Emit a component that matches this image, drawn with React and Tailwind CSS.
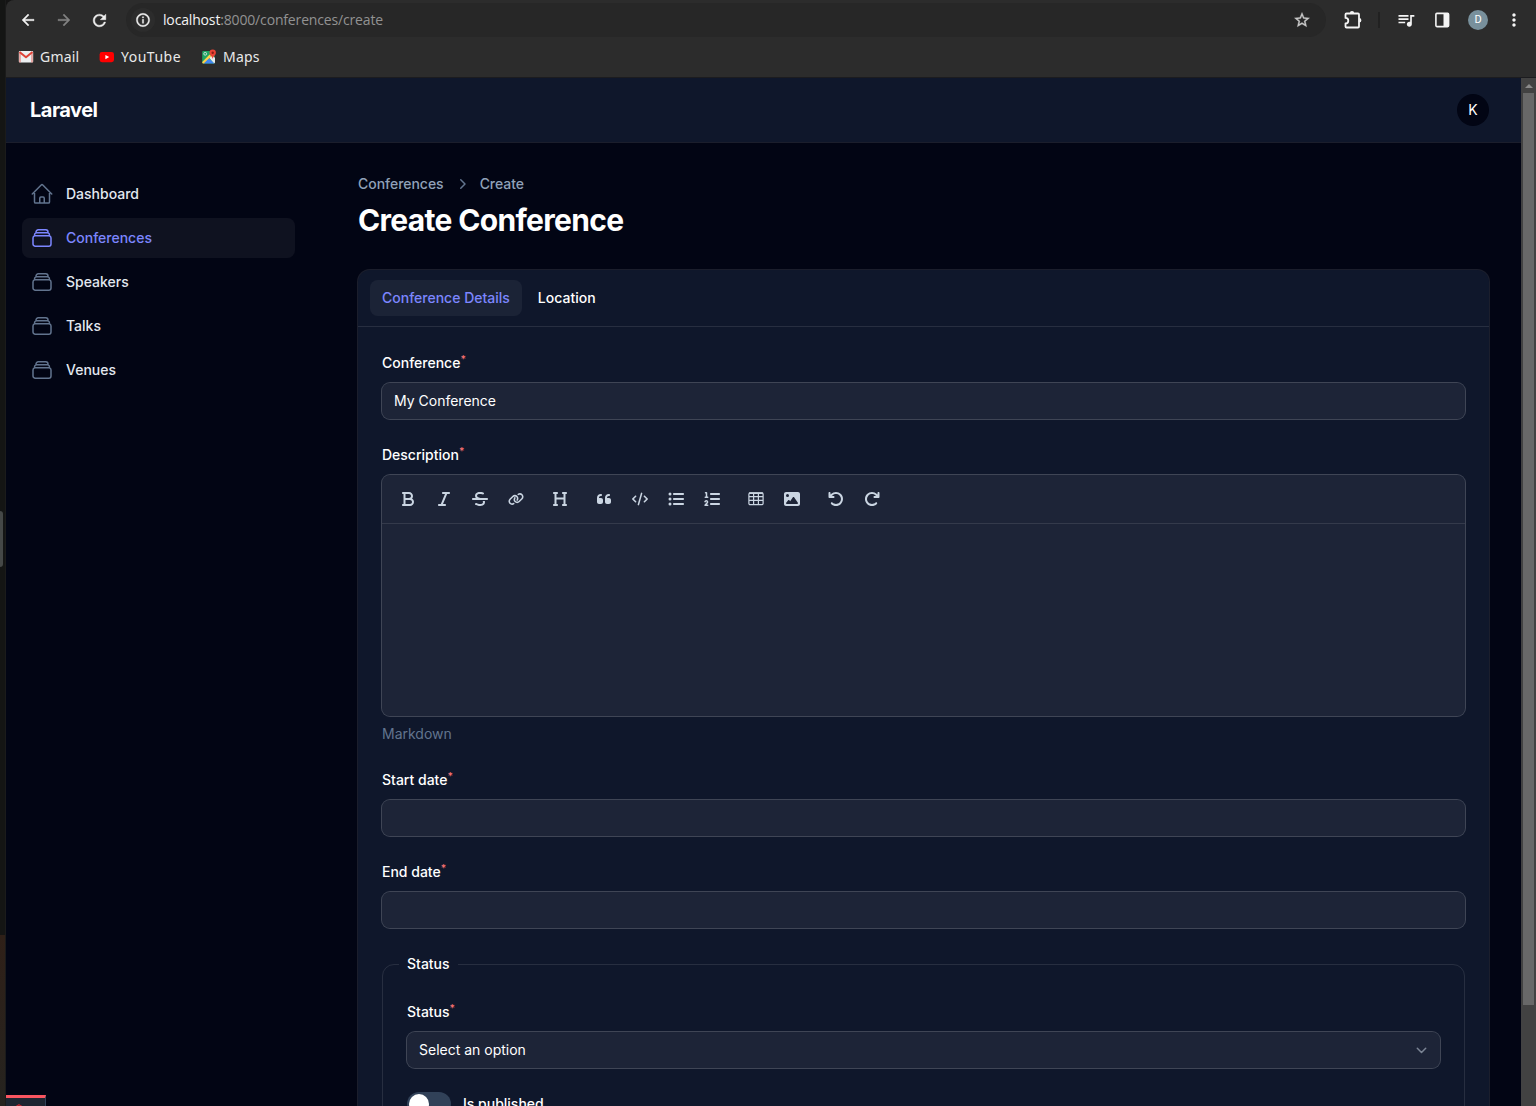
import React from "react";
import { MdQueueMusic, MdMoreVert } from "react-icons/md";
import {
  FaBold, FaItalic, FaStrikethrough, FaLink, FaHeading, FaQuoteLeft, FaCode,
  FaListUl, FaListOl, FaImage, FaArrowRotateLeft, FaArrowRotateRight,
} from "react-icons/fa6";
import { HiOutlineHome, HiOutlineRectangleStack, HiMiniChevronRight } from "react-icons/hi2";

function ChromeIcon({ d, className }) {
  return (
    <svg viewBox="0 0 24 24" className={className} fill="currentColor" stroke="currentColor" strokeWidth="0.500">
      <path d={d} />
    </svg>
  );
}

const glyphs = {
  back: "M20 11H7.830l5.590-5.590L12 4l-8 8 8 8 1.410-1.410L7.830 13H20v-2z",
  forward: "M12 4l-1.410 1.410L16.170 11H4v2h12.170l-5.580 5.590L12 20l8-8z",
  refresh: "M17.650 6.350A7.958 7.958 0 0 0 12 4c-4.420 0-7.990 3.580-7.990 8s3.570 8 7.990 8c3.730 0 6.840-2.550 7.730-6h-2.080A5.990 5.990 0 0 1 12 18c-3.310 0-6-2.690-6-6s2.690-6 6-6c1.660 0 3.140.69 4.220 1.780L13 11h7V4l-2.350 2.350z",
  info: "M11 7h2v2h-2zm0 4h2v6h-2zm1-9C6.480 2 2 6.480 2 12s4.480 10 10 10 10-4.480 10-10S17.520 2 12 2zm0 18c-4.410 0-8-3.590-8-8s3.590-8 8-8 8 3.590 8 8-3.590 8-8 8z",
  star: "M22 9.240l-7.190-.62L12 2 9.190 8.630 2 9.240l5.460 4.730L5.820 21 12 17.270 18.180 21l-1.630-7.030L22 9.240zM12 15.400l-3.760 2.270 1-4.280-3.320-2.880 4.380-.38L12 6.100l1.710 4.040 4.380.38-3.320 2.880 1 4.280L12 15.400z",
};

function GmailIcon() {
  return (
    <svg viewBox="0 0 16 16" className="h-4 w-4">
      <rect x="0.800" y="2" width="14.400" height="11.600" rx="1" fill="#eceff1" />
      <path d="M2 13.600V4M14 13.600V4" stroke="#e2645b" strokeWidth="1.400" opacity=".7" />
      <path d="M1.500 3 8 8.300 14.500 3" fill="none" stroke="#df4338" strokeWidth="2" strokeLinejoin="round" />
    </svg>
  );
}

function YouTubeIcon() {
  return (
    <svg viewBox="0 0 16 16" className="h-4 w-4">
      <rect x="0.600" y="3" width="14.400" height="10.200" rx="2.400" fill="#f00" />
      <path d="M6.400 5.900v4.400l3.800-2.200z" fill="#fff" />
    </svg>
  );
}

function MapsIcon() {
  return (
    <svg viewBox="0 0 16 16" className="h-4 w-4">
      <path d="M2.500 2h11v12.600h-11a1.300 1.300 0 0 1-1.300-1.300V3.300A1.300 1.300 0 0 1 2.500 2z" fill="#1fa463" />
      <path d="m8 8.500 3.600-2.500 2.400 3v4.500l-1 1.100z" fill="#e8eaed" />
      <path d="m1.200 12.900 7.400-7.400 1.800 1.800-7.300 7.300h-.6a1.300 1.300 0 0 1-1.300-1.300z" fill="#ffd04b" />
      <path d="M8 9.400 13.400 14.600H2.800z" fill="#4285f4" />
      <circle cx="4.200" cy="4.800" r="1.400" fill="none" stroke="#e8eaed" strokeWidth=".8" />
      <path d="M11.700.6a3.200 3.200 0 0 1 3.200 3.200c0 2.500-2.500 3-3.200 6.200-.7-3.200-3.200-3.700-3.200-6.200A3.200 3.200 0 0 1 11.700.6z" fill="#ea4335" />
      <circle cx="11.700" cy="3.700" r="1.200" fill="#8c1f17" />
    </svg>
  );
}

function PuzzleIcon() {
  return (
    <svg viewBox="0 0 20 20" className="h-5 w-5">
      <path
        d="M3.500 3.500H15a1 1 0 0 1 1 1v12a1 1 0 0 1-1 1H3.500a1 1 0 0 1-1-1v-3a2.700 2.700 0 0 0 0-5.600V4.500a1 1 0 0 1 1-1z"
        fill="none"
        stroke="currentColor"
        strokeWidth="1.800"
        strokeLinejoin="round"
      />
      <path d="M6.800 3.200a2.200 2.200 0 0 1 4.400 0zM16.200 8.100a2.200 2.200 0 0 1 0 4.400z" fill="currentColor" />
    </svg>
  );
}

function TableIcon() {
  return (
    <svg viewBox="0 0 16 16" className="h-4 w-4" fill="none" stroke="currentColor" strokeWidth="1.200">
      <rect x="0.900" y="1.900" width="14.200" height="11.800" rx="1.300" />
      <path d="M1 2.200h14" strokeWidth="1.600" />
      <path d="M1 5.600h14M1 9.400h14M5.600 2v11.500M10.400 2v11.500" />
    </svg>
  );
}

function Browser() {
  return (
    <div className="flex h-[78px] shrink-0 flex-col rounded-tl-lg border-b border-[#1c1c1f] bg-[#2c2c2c]">
      <div className="flex h-10 items-center">
        <div className="flex w-[120px] items-center gap-[18px] pl-[13px] text-[#f1f1f1]">
          <ChromeIcon d={glyphs.back} className="h-[18px] w-[18px] shrink-0" />
          <ChromeIcon d={glyphs.forward} className="h-[18px] w-[18px] shrink-0 text-[#828282]" />
          <ChromeIcon d={glyphs.refresh} className="h-[19px] w-[19px] shrink-0 -translate-x-px" />
        </div>
        <div className="flex h-[34px] w-[1200px] items-center rounded-full bg-[#272727] pl-[5px] pr-[15px]">
          <span className="flex h-6 w-6 items-center justify-center rounded-full bg-[#2c2c2c] text-[#efefef]">
            <ChromeIcon d={glyphs.info} className="h-4 w-4" />
          </span>
          <span className="ml-2 font-['Open_Sans','Noto_Sans',sans-serif] text-[14px] leading-5 tracking-[-0.160px] text-[#929292]">
            <span className="text-[#f3f3f3]">localhost</span>:8000/conferences/create
          </span>
          <ChromeIcon d={glyphs.star} className="ml-auto h-[18px] w-[18px] text-[#cacaca]" />
        </div>
        <div className="flex flex-1 items-center pl-[17px] text-[#f5f5f5]">
          <PuzzleIcon />
          <span className="ml-[15px] h-4 w-0.5 bg-[#212121]" />
          <MdQueueMusic className="ml-4 h-5 w-5" />
          <svg viewBox="0 0 16 16" className="ml-[18px] h-4 w-4">
            <rect x="1.900" y="1.400" width="12.700" height="13.200" rx="1" fill="none" stroke="currentColor" strokeWidth="1.600" />
            <path d="M9.500 1h5v14h-5z" fill="currentColor" />
          </svg>
          <span className="ml-[18px] flex h-5 w-5 items-center justify-center rounded-full bg-[#78909c] font-['Roboto',sans-serif] text-[11px] text-white">D</span>
          <MdMoreVert className="ml-4 h-5 w-5" />
        </div>
      </div>
      <div className="flex h-[34px] items-center pl-3 font-['Noto_Sans',sans-serif] text-[14px] text-[#e9e9e9]">
        <GmailIcon />
        <span className="-mt-0.5 ml-1.5 w-[59px] tracking-[0.200px]">Gmail</span>
        <YouTubeIcon />
        <span className="-mt-0.5 ml-1.5 w-20 tracking-[0.500px]">YouTube</span>
        <MapsIcon />
        <span className="-mt-0.5 ml-1.5 tracking-[0.200px]">Maps</span>
      </div>
    </div>
  );
}

function NavItem({ icon: Icon, label, active }) {
  return (
    <a className={`flex h-10 items-center gap-3 rounded-lg px-2 text-sm font-medium ${active ? "bg-white/5 text-indigo-400" : "text-slate-200"}`}>
      <Icon className={`h-6 w-6 ${active ? "text-indigo-400" : "text-slate-500"}`} />
      {label}
    </a>
  );
}

function Label({ children }) {
  return (
    <div className="h-6 text-sm font-medium leading-6 text-white">
      {children}
      <sup className="font-medium text-[#f87171]">*</sup>
    </div>
  );
}

function Field({ label, children }) {
  return (
    <div className="grid gap-2">
      <Label>{label}</Label>
      {children}
    </div>
  );
}

function Input({ children }) {
  return (
    <div className="flex h-9 items-center rounded-lg bg-white/[0.060] px-3 text-sm text-white ring-1 ring-white/20">
      {children}
    </div>
  );
}

const toolGroups = [
  [FaBold, FaItalic, FaStrikethrough, FaLink],
  [FaHeading],
  [FaQuoteLeft, FaCode, FaListUl, FaListOl],
  [TableIcon, FaImage],
  [FaArrowRotateLeft, FaArrowRotateRight],
];

function Editor() {
  return (
    <div>
      <div className="h-[241px] rounded-lg bg-white/[0.060] ring-1 ring-white/20">
        <div className="flex h-[49px] items-center gap-3 border-b border-white/10 px-2.5 text-slate-300">
          {toolGroups.map((group, i) => (
            <div key={i} className="flex gap-1">
              {group.map((Icon, j) => (
                <span key={j} className="flex h-8 w-8 items-center justify-center">
                  <Icon className="h-4 w-4" />
                </span>
              ))}
            </div>
          ))}
        </div>
      </div>
      <div className="mt-2 text-sm text-slate-500">Markdown</div>
    </div>
  );
}

function Sidebar() {
  return (
    <nav className="flex w-80 shrink-0 flex-col gap-1 pl-4 pr-[31px] pt-8">
      <NavItem icon={HiOutlineHome} label="Dashboard" />
      <NavItem icon={HiOutlineRectangleStack} label="Conferences" active />
      <NavItem icon={HiOutlineRectangleStack} label="Speakers" />
      <NavItem icon={HiOutlineRectangleStack} label="Talks" />
      <NavItem icon={HiOutlineRectangleStack} label="Venues" />
    </nav>
  );
}

function Main() {
  return (
    <main className="flex-1 px-8 pt-8">
      <div className="flex h-5 items-center gap-2 text-sm font-medium tracking-[-0.030px] text-slate-400">
        Conferences
        <HiMiniChevronRight className="h-5 w-5 text-slate-500" />
        Create
      </div>
      <h1 className="mt-2 text-3xl font-bold leading-9 tracking-[-0.680px] text-white">Create Conference</h1>
      <section className="mt-8 h-[900px] rounded-xl bg-slate-900 ring-1 ring-white/10">
        <div className="flex h-[57px] items-center gap-1 border-b border-white/10 px-3 text-sm font-medium text-white">
          <span className="flex h-9 items-center rounded-lg bg-white/5 px-3 text-indigo-400">Conference Details</span>
          <span className="flex h-9 items-center px-3">Location</span>
        </div>
        <div className="flex flex-col gap-6 p-6">
          <Field label="Conference"><Input>My Conference</Input></Field>
          <Field label="Description"><Editor /></Field>
          <Field label="Start date"><Input /></Field>
          <Field label="End date"><Input /></Field>
          <fieldset className="h-72 rounded-xl border border-white/10 px-6">
            <legend className="-ml-2 px-2 text-sm font-medium leading-6 text-white">Status</legend>
            <div className="flex flex-col gap-6 pt-6">
              <Field label="Status">
                <Input>
                  Select an option
                  <svg viewBox="0 0 20 20" className="-mr-[3px] ml-auto h-5 w-5" fill="none" stroke="#7b8494" strokeWidth="1.500" strokeLinecap="round" strokeLinejoin="round">
                    <path d="m6.300 8.300 4.200 4.200 4.200-4.200" />
                  </svg>
                </Input>
              </Field>
              <div className="flex items-center gap-3 text-sm font-medium leading-6 text-white">
                <span className="flex h-6 w-11 rounded-full bg-slate-700 p-0.5">
                  <span className="h-5 w-5 rounded-full bg-white" />
                </span>
                Is published
              </div>
            </div>
          </fieldset>
        </div>
      </section>
    </main>
  );
}

function Scrollbar() {
  return (
    <div className="flex w-[15px] shrink-0 flex-col items-center bg-[#424242]">
      <div className="flex h-[15px] items-center">
        <svg viewBox="0 0 8 4" className="h-1 w-2"><path d="M0 4 4 0l4 4z" fill="#8a8a8a" /></svg>
      </div>
      <div className="h-[912px] w-[11px] bg-[#686868]" />
    </div>
  );
}

export default function App() {
  return (
    <div className="relative flex h-[1106px] w-[1536px] overflow-hidden bg-[#141414] font-['Inter',sans-serif] antialiased">
      <div className="flex w-1.5 shrink-0 flex-col border-r border-[#1b1b1b] bg-[#141514]">
        <div className="mt-[511px] h-14 w-[3px] rounded-r bg-[#454847]" />
        <div className="mt-[368px] flex-1 bg-gradient-to-b from-[#2f2018] to-[#25231f]" />
      </div>
      <div className="flex min-w-0 flex-1 flex-col">
        <Browser />
        <div className="flex min-h-0 flex-1">
          <div className="flex min-w-0 flex-1 flex-col overflow-hidden bg-[#020514]">
            <header className="flex h-16 shrink-0 items-center justify-between bg-slate-900 pl-6 pr-8 ring-1 ring-white/10">
              <span className="text-xl font-bold tracking-tight text-white">Laravel</span>
              <span className="flex h-8 w-8 items-center justify-center rounded-full bg-[#020514] text-sm text-white">K</span>
            </header>
            <div className="flex flex-1">
              <Sidebar />
              <Main />
            </div>
          </div>
          <Scrollbar />
        </div>
      </div>
      <div className="absolute bottom-0 left-1.5 h-[11px] w-10 overflow-hidden border-r border-t-[3px] border-r-slate-700 border-t-[#fa5560] bg-[#1d2531]">
        <svg viewBox="0 0 14 14" className="ml-1.5 mt-1.5 h-3.5 w-3.5" fill="none" stroke="#c4262e" strokeWidth="1.200">
          <path d="M7 .8 12.500 4v6L7 13.200 1.500 10V4zM4 3.500 7 5l3-1.500" />
        </svg>
      </div>
    </div>
  );
}
